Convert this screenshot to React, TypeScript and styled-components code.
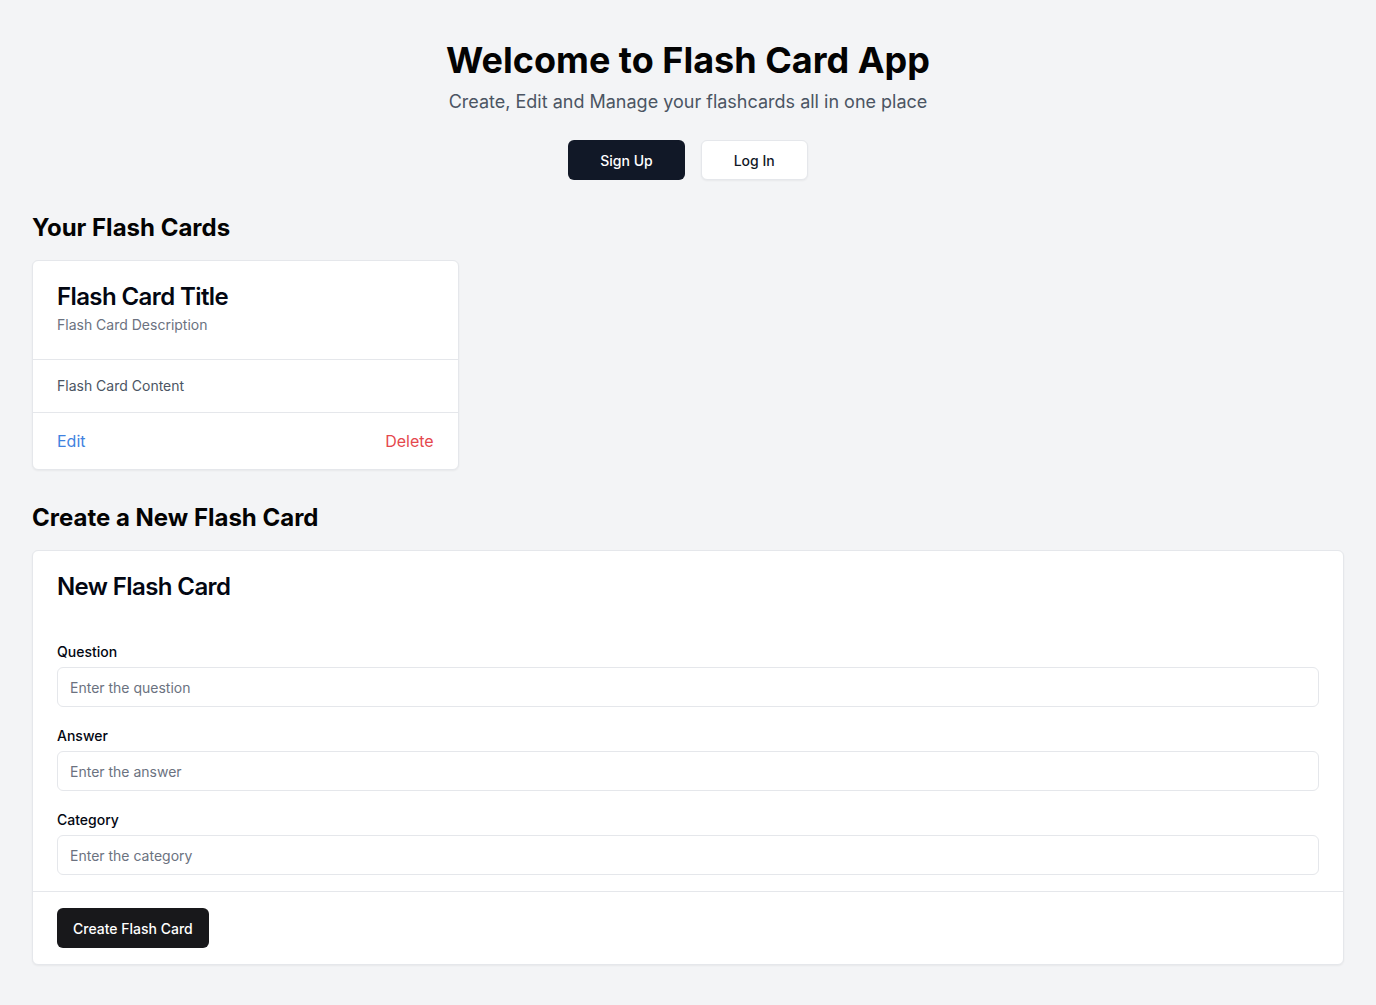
import React from "react";
import styled, { createGlobalStyle } from "styled-components";

const GlobalStyle = createGlobalStyle`
  * { box-sizing: border-box; }
  html, body { margin: 0; padding: 0; background: #f3f4f6; }
  body {
    font-family: Inter, "Noto Sans", "Liberation Sans", sans-serif;
    color: #030712;
    -webkit-font-smoothing: antialiased;
  }
`;

const Page = styled.div`
  min-height: 1005px;
  padding: 40px 32px 40px;
`;

const Hero = styled.header`
  display: flex;
  flex-direction: column;
  align-items: center;
  text-align: center;
`;

const Title = styled.h1`
  margin: 0;
  font-size: 36px;
  line-height: 40px;
  font-weight: 700;
  color: #030303;
`;

const Subtitle = styled.p`
  margin: 8px 0 0;
  font-size: 18px;
  line-height: 28px;
  color: #4b5563;
`;

const ButtonRow = styled.div`
  display: flex;
  gap: 16px;
  margin-top: 24px;
`;

const Button = styled.button<{ $variant?: "dark" | "light" | "black" }>`
  height: 40px;
  padding: 0
    ${(p) => (p.$variant === "light" ? "32px" : p.$variant === "black" ? "15px" : "31px")};
  border-radius: 6px;
  font-family: inherit;
  font-size: 14px;
  font-weight: 500;
  cursor: pointer;
  border: 1px solid
    ${(p) => (p.$variant === "light" ? "#e5e7eb" : "transparent")};
  background: ${(p) =>
    p.$variant === "light" ? "#ffffff" : p.$variant === "black" ? "#18181b" : "#111827"};
  color: ${(p) => (p.$variant === "light" ? "#111827" : "#ffffff")};
  box-shadow: ${(p) => (p.$variant === "light" ? "0 1px 2px rgba(0,0,0,0.05)" : "none")};
`;

const SectionTitle = styled.h2<{ $top: number }>`
  margin: ${(p) => p.$top}px 0 16px;
  font-size: 24px;
  line-height: 32px;
  font-weight: 700;
  color: #030303;
`;

const CardGrid = styled.div`
  display: grid;
  grid-template-columns: repeat(3, 1fr);
  gap: 16px;
`;

const Card = styled.div`
  background: #ffffff;
  border: 1px solid #e5e7eb;
  border-radius: 6px;
  box-shadow: 0 1px 2px rgba(0, 0, 0, 0.05);
`;

const CardHeader = styled.div<{ $bordered?: boolean }>`
  padding: 24px;
  display: flex;
  flex-direction: column;
  gap: 6px;
  border-bottom: ${(p) => (p.$bordered ? "1px solid #e5e7eb" : "none")};
`;

const CardTitle = styled.h3`
  margin: 0;
  font-size: 24px;
  line-height: 24px;
  font-weight: 600;
  letter-spacing: -0.6px;
  color: #030712;
`;

const CardDescription = styled.p`
  margin: 0;
  font-size: 14px;
  line-height: 20px;
  color: #6b7280;
`;

const CardBody = styled.div`
  padding: 16px 24px;
  font-size: 14px;
  line-height: 20px;
  color: #4b5563;
  border-bottom: 1px solid #e5e7eb;
`;

const CardFooter = styled.div`
  padding: 16px 24px;
  display: flex;
  justify-content: space-between;
  align-items: center;
`;

const LinkButton = styled.button<{ $tone: "blue" | "red" }>`
  border: none;
  background: none;
  padding: 0;
  font-family: inherit;
  font-size: 16px;
  line-height: 24px;
  cursor: pointer;
  color: ${(p) => (p.$tone === "blue" ? "#3f82e0" : "#e5484d")};
`;

const FormBody = styled.div`
  padding: 19px 24px 16px;
  display: flex;
  flex-direction: column;
  gap: 19px;
  border-bottom: 1px solid #e5e7eb;
`;

const Field = styled.div`
  display: flex;
  flex-direction: column;
  gap: 5px;
`;

const Label = styled.label`
  font-size: 14px;
  line-height: 20px;
  font-weight: 500;
  color: #030712;
`;

const Input = styled.input`
  height: 40px;
  width: 100%;
  padding: 0 12px;
  border: 1px solid #e5e7eb;
  border-radius: 6px;
  font-family: inherit;
  font-size: 14px;
  color: #111827;
  background: #ffffff;
  outline: none;
  &::placeholder { color: #6b7280; }
`;

const FormFooter = styled.div`
  padding: 16px 24px;
  display: flex;
`;

const fields = [
  { label: "Question", placeholder: "Enter the question" },
  { label: "Answer", placeholder: "Enter the answer" },
  { label: "Category", placeholder: "Enter the category" },
];

export default function App() {
  return (
    <>
      <GlobalStyle />
      <Page>
        <Hero>
          <Title>Welcome to Flash Card App</Title>
          <Subtitle>Create, Edit and Manage your flashcards all in one place</Subtitle>
          <ButtonRow>
            <Button $variant="dark">Sign Up</Button>
            <Button $variant="light">Log In</Button>
          </ButtonRow>
        </Hero>

        <SectionTitle $top={32}>Your Flash Cards</SectionTitle>
        <CardGrid>
          <Card>
            <CardHeader $bordered>
              <CardTitle>Flash Card Title</CardTitle>
              <CardDescription>Flash Card Description</CardDescription>
            </CardHeader>
            <CardBody>Flash Card Content</CardBody>
            <CardFooter>
              <LinkButton $tone="blue">Edit</LinkButton>
              <LinkButton $tone="red">Delete</LinkButton>
            </CardFooter>
          </Card>
        </CardGrid>

        <SectionTitle $top={32}>Create a New Flash Card</SectionTitle>
        <Card>
          <CardHeader>
            <CardTitle>New Flash Card</CardTitle>
          </CardHeader>
          <FormBody>
            {fields.map((f) => (
              <Field key={f.label}>
                <Label>{f.label}</Label>
                <Input placeholder={f.placeholder} />
              </Field>
            ))}
          </FormBody>
          <FormFooter>
            <Button $variant="black">Create Flash Card</Button>
          </FormFooter>
        </Card>
      </Page>
    </>
  );
}
